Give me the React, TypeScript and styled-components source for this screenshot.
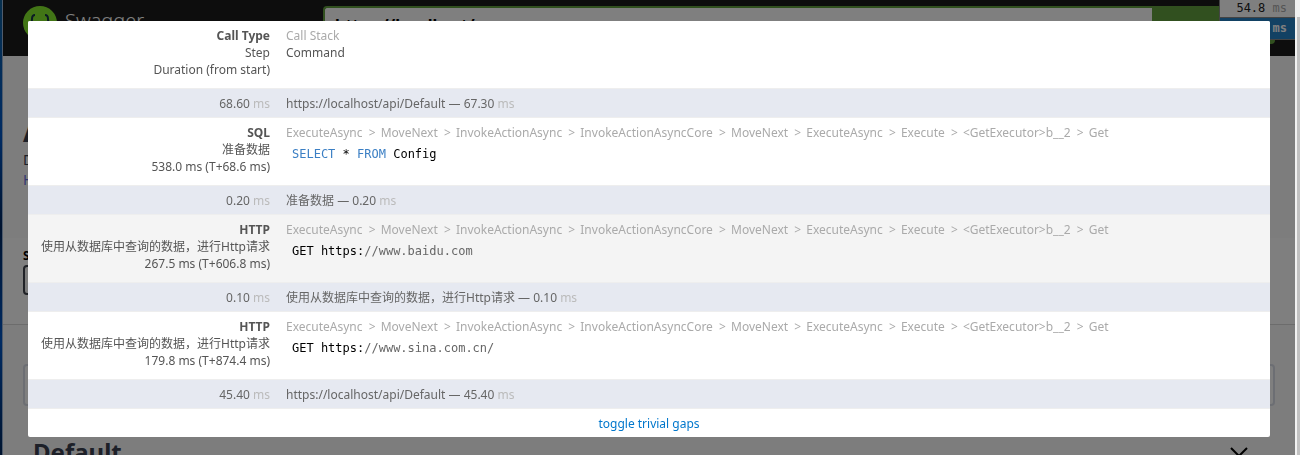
import React from 'react';
import styled, { createGlobalStyle } from 'styled-components';

const sans = '"Noto Sans", "Noto Sans CJK SC", sans-serif';
const mono = '"DejaVu Sans Mono", "Liberation Mono", monospace';

const GlobalStyle = createGlobalStyle`
  * { box-sizing: border-box; }
  body { margin: 0; height: 100vh; overflow: hidden; font-family: ${sans}; }
`;

const Screen = styled.div`
  display: flex;
  height: 100vh;
  overflow: hidden;
`;

const DesktopEdge = styled.div`
  flex: 0 0 3px;
  background: linear-gradient(#07304f, #002b63 30%, #00132f 50%, #002b63 75%, #00142f);
  border-right: 1px solid #4f5b6b;
`;

const ScrollTrack = styled.div`
  flex: 0 0 5px;
  padding: 17px 0 0 2px;
  background: #f1f1f1;
`;

const ScrollThumb = styled.div`
  height: 100%;
  background: #c1c1c1;
`;

const Page = styled.div`
  flex: 1;
  min-width: 0;
  background: #fafafa;
`;

const TopBar = styled.header`
  display: flex;
  height: 56px;
  padding: 6px 20px;
  background: #1b1b1b;
`;

const Brand = styled.a`
  display: flex;
  flex: 0 0 300px;
  gap: 8px;
  color: #fff;
  font-size: 20px;
  font-weight: 300;
  line-height: 30px;
  text-decoration: none;
`;

const Download = styled.form`
  display: flex;
  flex: 1;
  height: 38px;
`;

const UrlInput = styled.input`
  flex: 1;
  min-width: 0;
  border: 2px solid #62a03f;
  border-right: 0;
  border-radius: 4px 0 0 4px;
  padding: 2px 10px;
  background: #fff;
  font: bold 16px ${sans};
`;

const Explore = styled.button`
  flex: 0 0 123px;
  border: 0;
  border-radius: 0 4px 4px 0;
  background: #62a03f;
`;

const Info = styled.section`
  height: 182px;
  padding: 54px 20px 0;
  color: #3b4151;
`;

const Title = styled.h1`
  margin: 0;
  font-size: 32px;
  line-height: 40px;
`;

const Blurb = styled.p`
  margin: 0;
  font-size: 14px;
  line-height: 20px;
`;

const InfoLink = styled.a`
  display: block;
  color: #6a72e0;
  font-size: 14px;
  line-height: 20px;
  text-decoration: none;
`;

const Servers = styled.section`
  height: 87px;
  padding: 8px 20px;
  border-bottom: 1px solid #d8d8d8;
  background: #fff;
`;

const ServerLabel = styled.label`
  display: flex;
  flex-direction: column;
  font-size: 12px;
  font-weight: bold;
  line-height: 19px;
`;

const ServerSelect = styled.select`
  width: 200px;
  height: 30px;
  border: 2px solid #41444e;
  border-radius: 4px;
  background: #f7f7f7;
`;

const Filter = styled.div`
  padding: 39px 20px 0;
`;

const FilterInput = styled.input`
  display: block;
  width: 100%;
  height: 42px;
  border: 2px solid #d8dde7;
  border-radius: 4px;
  background: #fff;
`;

const TagHeading = styled.h2`
  display: flex;
  justify-content: space-between;
  align-items: center;
  margin: 26px 46px 0 30px;
  color: #3b4151;
  font-size: 24px;
  line-height: 40px;
`;

const Backdrop = styled.div`
  position: fixed;
  inset: 0 5px 0 3px;
  background: rgba(0, 0, 0, 0.5);
`;

const Timings = styled.aside`
  position: fixed;
  top: 0;
  right: 5px;
  display: flex;
  flex-direction: column;
  width: 76px;
  font: 12px/17px ${mono};
`;

const Timing = styled.button<{ $active?: boolean }>`
  height: ${(p) => (p.$active ? 22 : 18)}px;
  padding: 0 8px;
  border: 0;
  border-bottom: 1px solid #888;
  border-left: 1px solid #888;
  background: ${(p) => (p.$active ? '#2482c6' : '#fff')};
  color: ${(p) => (p.$active ? '#fff' : '#222')};
  font: inherit;
  font-weight: ${(p) => (p.$active ? 'bold' : 'normal')};
  text-align: right;
  white-space: nowrap;
`;

const TimingUnit = styled.span<{ $active?: boolean }>`
  color: ${(p) => (p.$active ? '#fff' : '#aaa')};
`;

const Queries = styled.div`
  position: fixed;
  top: 21px;
  right: 30px;
  left: 28px;
  border-radius: 2px;
  overflow: hidden;
  background: #fff;
  color: #555;
  font-size: 12px;
  line-height: 17px;
`;

const QueryTable = styled.table`
  width: 100%;
  border-spacing: 0;
  table-layout: fixed;
`;

const InfoCol = styled.col`
  width: 250px;
`;

const QueryRow = styled.tr<{ $odd?: boolean }>`
  height: 67px;
  background: ${(p) => (p.$odd ? '#f4f4f4' : '#fff')};
`;

const InfoCell = styled.td`
  padding: 6px 8px;
  text-align: right;
  vertical-align: top;
  font-weight: normal;
  white-space: nowrap;
`;

const QueryCell = styled.td`
  padding: 6px 8px;
  text-align: left;
  vertical-align: top;
  font-weight: normal;
`;

const Line = styled.div``;

const CallType = styled.div`
  font-weight: bold;
`;

const Stack = styled.div`
  color: #aaa;
`;

const Separator = styled.span`
  margin: 0 2px 0 3px;
`;

const Command = styled.pre`
  margin: 5px 0 0;
  padding: 0 6px;
  color: #000;
  font: 12px/17px ${mono};
`;

const Keyword = styled.span`
  color: #3b7fc4;
`;

const Comment = styled.span`
  color: #666;
`;

const GapRow = styled.tr`
  height: 30px;
  background: #e6e9f1;
  color: #666;
`;

const GapCell = styled.td<{ $right?: boolean }>`
  padding: 0 8px;
  border-top: 1px solid #eee;
  border-bottom: 1px solid #eee;
  text-align: ${(p) => (p.$right ? 'right' : 'left')};
`;

const Unit = styled.span`
  color: #bbb;
`;

const Footer = styled.div`
  padding: 6px 0 5px;
  text-align: center;
`;

const ToggleLink = styled.a`
  color: #0077cc;
  text-decoration: none;
`;

const CALL_STACK = [
  'ExecuteAsync',
  'MoveNext',
  'InvokeActionAsync',
  'InvokeActionAsyncCore',
  'MoveNext',
  'ExecuteAsync',
  'Execute',
  '<GetExecutor>b__2',
  'Get',
];

interface QueryProps {
  type: string;
  step: string;
  duration: string;
  odd?: boolean;
  children: React.ReactNode;
}

const Query = ({ type, step, duration, odd, children }: QueryProps) => (
  <QueryRow $odd={odd}>
    <InfoCell>
      <CallType>{type}</CallType>
      <Line>{step}</Line>
      <Line>{duration}</Line>
    </InfoCell>
    <QueryCell>
      <Stack>
        {CALL_STACK.map((frame, i) => (
          <React.Fragment key={i}>
            {i > 0 && (
              <>
                {' '}
                <Separator>&gt;</Separator>{' '}
              </>
            )}
            {frame}
          </React.Fragment>
        ))}
      </Stack>
      <Command>{children}</Command>
    </QueryCell>
  </QueryRow>
);

const Gap = ({ total, reason, spent }: { total: string; reason: string; spent: string }) => (
  <GapRow>
    <GapCell $right>
      {total} <Unit>ms</Unit>
    </GapCell>
    <GapCell>
      {reason} — {spent} <Unit>ms</Unit>
    </GapCell>
  </GapRow>
);

const Logo = () => (
  <svg width="34" height="34" viewBox="0 0 34 34" aria-hidden="true">
    <circle cx="17" cy="17" r="17" fill="#85ea2d" />
    <path
      d="M12 9c-3 0-3 2-3 4s0 4-2 4c2 0 2 2 2 4s0 4 3 4M22 9c3 0 3 2 3 4s0 4 2 4c-2 0-2 2-2 4s0 4-3 4"
      fill="none"
      stroke="#173647"
      strokeWidth="2"
    />
    <path d="M12 17h1M17 17h1M22 17h1" stroke="#173647" strokeWidth="2" />
  </svg>
);

const App = () => (
  <>
    <GlobalStyle />
    <Screen>
      <DesktopEdge />
      <Page>
        <TopBar>
          <Brand href="#">
            <Logo />
            Swagger
          </Brand>
          <Download>
            <UrlInput aria-label="Definition" defaultValue="https://localhost/s" />
            <Explore type="button" aria-label="Explore" />
          </Download>
        </TopBar>
        <Info>
          <Title>A</Title>
          <Blurb>D</Blurb>
          <InfoLink href="#">H</InfoLink>
        </Info>
        <Servers>
          <ServerLabel>
            S
            <ServerSelect />
          </ServerLabel>
        </Servers>
        <Filter>
          <FilterInput aria-label="Filter" />
        </Filter>
        <TagHeading>
          Default
          <svg width="20" height="20" viewBox="0 0 20 20" fill="none" stroke="#000" strokeWidth="2" aria-hidden="true">
            <path d="M2 6l8 8 8-8" />
          </svg>
        </TagHeading>
      </Page>
      <ScrollTrack>
        <ScrollThumb />
      </ScrollTrack>
    </Screen>
    <Timings>
      <Timing type="button">
        54.8 <TimingUnit>ms</TimingUnit>
      </Timing>
      <Timing type="button" $active>
        <TimingUnit $active>ms</TimingUnit>
      </Timing>
    </Timings>
    <Backdrop />
    <Queries role="dialog" aria-label="Queries">
      <QueryTable>
        <colgroup>
          <InfoCol />
          <col />
        </colgroup>
        <thead>
          <QueryRow>
            <InfoCell as="th">
              <CallType>Call Type</CallType>
              <Line>Step</Line>
              <Line>Duration (from start)</Line>
            </InfoCell>
            <QueryCell as="th">
              <Stack>Call Stack</Stack>
              <Line>Command</Line>
            </QueryCell>
          </QueryRow>
        </thead>
        <tbody>
          <Gap total="68.60" reason="https://localhost/api/Default" spent="67.30" />
          <Query type="SQL" step="准备数据" duration="538.0 ms (T+68.6 ms)">
            <Keyword>SELECT</Keyword> * <Keyword>FROM</Keyword> Config
          </Query>
          <Gap total="0.20" reason="准备数据" spent="0.20" />
          <Query type="HTTP" step="使用从数据库中查询的数据，进行Http请求" duration="267.5 ms (T+606.8 ms)" odd>
            GET https:<Comment>//www.baidu.com</Comment>
          </Query>
          <Gap total="0.10" reason="使用从数据库中查询的数据，进行Http请求" spent="0.10" />
          <Query type="HTTP" step="使用从数据库中查询的数据，进行Http请求" duration="179.8 ms (T+874.4 ms)">
            GET https:<Comment>//www.sina.com.cn/</Comment>
          </Query>
          <Gap total="45.40" reason="https://localhost/api/Default" spent="45.40" />
        </tbody>
      </QueryTable>
      <Footer>
        <ToggleLink href="#">toggle trivial gaps</ToggleLink>
      </Footer>
    </Queries>
  </>
);

export default App;
